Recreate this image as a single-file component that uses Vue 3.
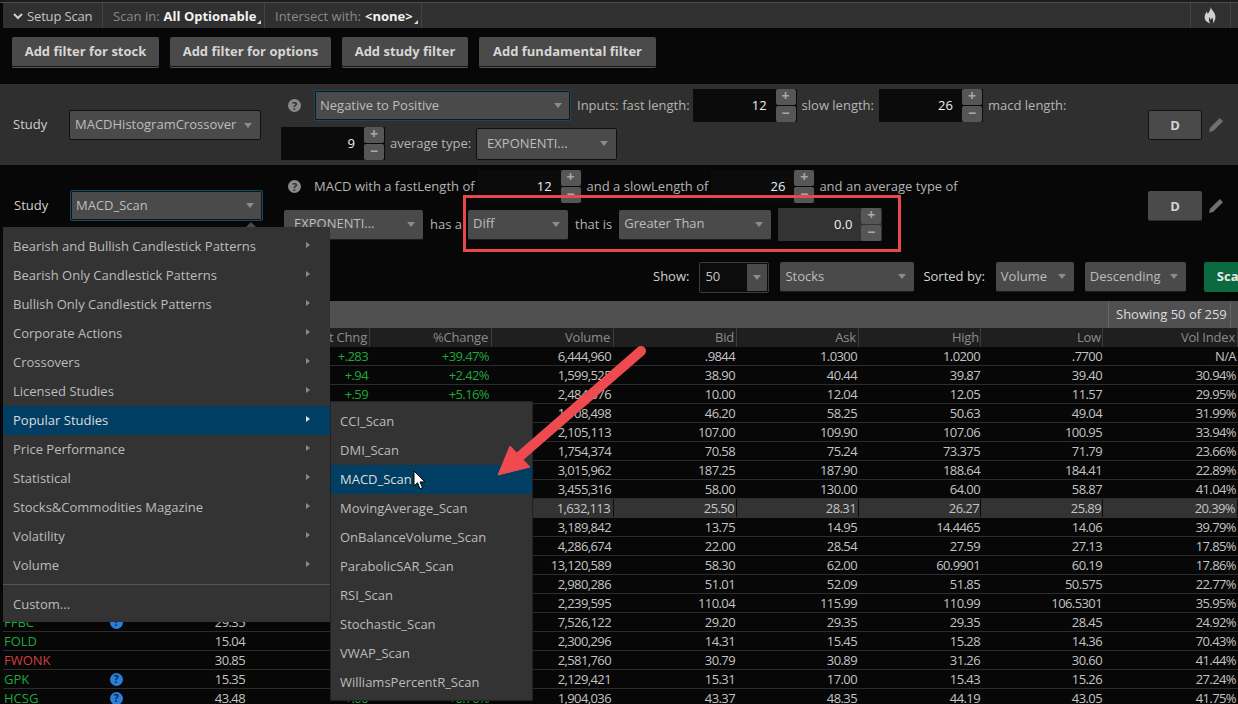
<template>
  <div class="page">
    <!-- top bar -->
    <div class="topline"></div>
    <header class="bar">
      <div class="seg setup">
        <svg class="chev" viewBox="0 0 10 8"><path d="M1 2l4 4 4-4" fill="none" stroke="#cfcfcf" stroke-width="2" /></svg>
        <span>Setup Scan</span>
      </div>
      <div class="seg scan"><span class="dim">Scan in:</span><b>All Optionable</b><i class="corner"></i></div>
      <div class="seg inter"><span class="dim">Intersect with:</span><b>&lt;none&gt;</b><i class="corner"></i></div>
      <div class="seg flame">
        <svg viewBox="0 0 12 17" width="12" height="17">
          <path d="M6.8 0c.4 2.800 3 4.200 4.200 7.200 1 2.800.4 6.800-2.400 9.300 1-2 .8-4-.6-6-.4 1.300-1 2-1.700 2.600-.1-1.300-.4-2.200-1-3-.5 1.500-.6 3.500.7 6.400C2.200 15.400.4 12.800.6 9.800.8 7.600 1.900 6.200 2.700 4.500c.5 1 .8 1.700 1 2.500C5 5 6.600 3 6.800 0z" fill="#d0d0d0" />
        </svg>
      </div>
    </header>

    <div class="filters">
      <button class="add" style="width: 147px">Add filter for stock</button>
      <button class="add" style="width: 161px">Add filter for options</button>
      <button class="add" style="width: 126px">Add study filter</button>
      <button class="add" style="width: 177px">Add fundamental filter</button>
    </div>

    <!-- first study -->
    <section class="study first">
      <div class="study-left">
        <span class="study-label">Study</span>
        <div class="sel boxed" style="width: 192px">MACDHistogramCrossover</div>
      </div>
      <div class="study-mid">
        <div class="line">
          <span class="help">?</span>
          <div class="sel focus" style="width: 257px; margin-left: 8px">Negative to Positive</div>
          <span class="lbl" style="margin-left: 1px">Inputs: fast length:</span>
          <div class="num" style="margin-left: -2px"><span class="val">12</span><div class="spin"><span>+</span><span>−</span></div></div>
          <span class="lbl">slow length:</span>
          <div class="num"><span class="val">26</span><div class="spin"><span>+</span><span>−</span></div></div>
          <span class="lbl">macd length:</span>
        </div>
        <div class="line">
          <div class="num"><span class="val">9</span><div class="spin"><span>+</span><span>−</span></div></div>
          <span class="lbl">average type:</span>
          <div class="sel boxed wide-pad" style="width: 141px; height: 32px">EXPONENTI...</div>
        </div>
      </div>
      <div class="study-right">
        <button class="d boxed-d">D</button>
        <svg class="pencil" viewBox="0 0 16 16" width="16" height="16"><path d="M11.800 1l3.200 3.200L5.200 14l-4.200 1 1-4.200zM1 15" fill="#707070" /></svg>
      </div>
    </section>

    <!-- second study -->
    <section class="study second">
      <div class="study-left">
        <span class="study-label shift">Study</span>
        <div class="sel focus" style="width: 193px">MACD_Scan</div>
      </div>
      <div class="study-mid">
        <div class="line">
          <span class="help">?</span>
          <span class="lbl" style="margin-left: 8px">MACD with a fastLength of</span>
          <div class="num" style="margin-left: -2px"><span class="val">12</span><div class="spin"><span>+</span><span>−</span></div></div>
          <span class="lbl">and a slowLength of</span>
          <div class="num" style="margin-left: -2px"><span class="val">26</span><div class="spin"><span>+</span><span>−</span></div></div>
          <span class="lbl" style="margin-left: -1px">and an average type of</span>
        </div>
        <div class="line line-b">
          <div class="sel wide-pad" style="width: 139px; margin-left: 3px">EXPONENTI...</div>
          <span class="lbl">has a</span>
          <div class="sel" style="width: 100px; margin-left: -1px">Diff</div>
          <span class="lbl">that is</span>
          <div class="sel" style="width: 152px">Greater Than</div>
          <div class="num lite"><span class="val">0.0</span><div class="spin"><span>+</span><span>−</span></div></div>
        </div>
      </div>
      <div class="study-right">
        <button class="d">D</button>
        <svg class="pencil" viewBox="0 0 16 16" width="16" height="16"><path d="M11.800 1l3.200 3.200L5.200 14l-4.200 1 1-4.200zM1 15" fill="#707070" /></svg>
      </div>
    </section>

    <!-- show / sort toolbar -->
    <div class="toolbar">
      <span class="lbl">Show:</span>
      <div class="show">50<i class="show-arrow"></i></div>
      <div class="sel" style="width: 134px; margin-left: 1px">Stocks</div>
      <span class="lbl" style="margin-left: -1px">Sorted by:</span>
      <div class="sel" style="width: 78px; margin-left: 1px">Volume</div>
      <div class="sel" style="width: 101px; margin-left: 1px">Descending</div>
      <button class="scan-btn">Scan</button>
    </div>

    <!-- results -->
    <div class="title-bar"><span class="showing">Showing 50 of 259</span></div>
    <div class="grid head">
      <span></span><span></span><span class="c"></span>
      <span v-for="h in headers" :key="h" class="c sep">{{ h }}</span>
    </div>
    <div v-for="(r, i) in rows" :key="i" class="grid row" :class="{ hi: i === 8 }">
      <span class="sym" :class="r.down ? 'red' : 'green'">{{ r.sym }}</span>
      <span class="ico"><i v-if="r.q" class="q">?</i></span>
      <span class="c">{{ r.last }}</span>
      <span class="c green">{{ r.net }}</span>
      <span class="c green">{{ r.pct }}</span>
      <span class="c">{{ r.vol }}</span>
      <span class="c">{{ r.bid }}</span>
      <span class="c">{{ r.ask }}</span>
      <span class="c">{{ r.high }}</span>
      <span class="c">{{ r.low }}</span>
      <span class="c">{{ r.vi }}</span>
    </div>

    <!-- overlays -->
    <div class="redbox"></div>

    <i class="menu-tip"></i>
    <div class="menu main">
      <div v-for="m in studyMenu" :key="m" class="item" :class="{ on: m === 'Popular Studies' }">
        {{ m }}<i class="tri"></i>
      </div>
      <div class="divider"></div>
      <div class="item">Custom...</div>
    </div>

    <div class="menu sub">
      <div v-for="m in scans" :key="m" class="item" :class="{ on: m === 'MACD_Scan' }">{{ m }}</div>
    </div>

    <svg class="arrow" width="1238" height="704" viewBox="0 0 1238 704">
      <path d="M641 351L518 458" stroke="#ee4a50" stroke-width="10" stroke-linecap="round" />
      <path d="M498 475L510 446L530 467z" fill="#ee4a50" stroke="#ee4a50" stroke-width="1" stroke-linejoin="round" />
    </svg>

    <svg class="cursor" width="13" height="20" viewBox="0 0 13 20">
      <path d="M1 1v15l3.500-3.300 2.500 6 2.500-1-2.500-5.800h5z" fill="#fff" stroke="#000" stroke-width="1" />
    </svg>
  </div>
</template>

<script setup>
const headers = ['Net Chng', '%Change', 'Volume', 'Bid', 'Ask', 'High', 'Low', 'Vol Index']

const studyMenu = [
  'Bearish and Bullish Candlestick Patterns',
  'Bearish Only Candlestick Patterns',
  'Bullish Only Candlestick Patterns',
  'Corporate Actions',
  'Crossovers',
  'Licensed Studies',
  'Popular Studies',
  'Price Performance',
  'Statistical',
  'Stocks&Commodities Magazine',
  'Volatility',
  'Volume',
]

const scans = [
  'CCI_Scan',
  'DMI_Scan',
  'MACD_Scan',
  'MovingAverage_Scan',
  'OnBalanceVolume_Scan',
  'ParabolicSAR_Scan',
  'RSI_Scan',
  'Stochastic_Scan',
  'VWAP_Scan',
  'WilliamsPercentR_Scan',
]

// vol, bid, ask, high, low, vol index
const raw = [
  '6,444,960 .9844 1.0300 1.0200 .7700 N/A',
  '1,599,525 38.90 40.44 39.87 39.40 30.94%',
  '2,484,076 10.00 12.04 12.05 11.57 29.95%',
  '1,108,498 46.20 58.25 50.63 49.04 31.99%',
  '2,105,113 107.00 109.90 107.06 100.95 33.94%',
  '1,754,374 70.58 75.24 73.375 71.79 23.66%',
  '3,015,962 187.25 187.90 188.64 184.41 22.89%',
  '3,455,316 58.00 130.00 64.00 58.87 41.04%',
  '1,632,113 25.50 28.31 26.27 25.89 20.39%',
  '3,189,842 13.75 14.95 14.4465 14.06 39.79%',
  '4,286,674 22.00 28.54 27.59 27.13 17.85%',
  '13,120,589 58.30 62.00 60.9901 60.19 17.86%',
  '2,980,286 51.01 52.09 51.85 50.575 22.77%',
  '2,239,595 110.04 115.99 110.99 106.5301 35.95%',
  '7,526,122 29.20 29.35 29.35 28.45 24.92%',
  '2,300,296 14.31 15.45 15.28 14.36 70.43%',
  '2,581,760 30.79 30.89 31.26 30.60 41.44%',
  '2,129,421 15.31 17.00 15.43 15.26 27.24%',
  '1,904,036 43.37 48.35 44.19 43.05 41.75%',
]

// the left columns only show where the menus leave them uncovered
const left = {
  0: { net: '+.283', pct: '+39.47%' },
  1: { net: '+.94', pct: '+2.42%' },
  2: { net: '+.59', pct: '+5.16%' },
  14: { sym: 'FFBC', q: true, last: '29.35' },
  15: { sym: 'FOLD', last: '15.04' },
  16: { sym: 'FWONK', last: '30.85', down: true },
  17: { sym: 'GPK', q: true, last: '15.35' },
  18: { sym: 'HCSG', q: true, last: '43.48', net: '+.00', pct: '+0.76%' },
}

const rows = raw.map((line, i) => {
  const [vol, bid, ask, high, low, vi] = line.split(' ')
  return { vol, bid, ask, high, low, vi, ...left[i] }
})
</script>

<style>
html,
body {
  background: #060606;
  overflow: hidden;
}
</style>

<style scoped>
.page {
  position: relative;
  width: 1238px;
  height: 704px;
  overflow: hidden;
  background: #070707;
  color: #c4c4c4;
  font-family: 'Open Sans', 'Noto Sans', sans-serif;
  font-size: 13px;
}
.topline {
  height: 3px;
  background: #1c1c1c;
  border-bottom: 1px solid #4a4a4a;
  box-sizing: border-box;
}
.bar {
  display: flex;
  height: 25px;
  margin-left: 3px;
  background: #303030;
}
.seg {
  display: flex;
  align-items: center;
  border-right: 1px solid #444;
  box-sizing: border-box;
  white-space: nowrap;
  position: relative;
}
.setup {
  width: 100px;
  padding-left: 10px;
  letter-spacing: -0.15px;
}
.chev {
  width: 10px;
  height: 8px;
  margin-right: 4px;
}
.scan {
  width: 162px;
  padding-left: 10px;
}
.inter {
  width: 157px;
  padding-left: 10px;
}
.seg b {
  margin-left: 4px;
  color: #f2f2f2;
  font-weight: 700;
}
.dim {
  color: #8a8a8a;
}
.corner {
  position: absolute;
  right: 3px;
  bottom: 4px;
  border-left: 4px solid transparent;
  border-bottom: 4px solid #d8d8d8;
}
.flame {
  margin-left: auto;
  width: 41px;
  height: 25px;
  margin-right: 7px;
  border-left: 1px solid #444;
  padding-left: 13px;
}
.filters {
  display: flex;
  gap: 11px;
  height: 56px;
  padding: 9px 0 0 12px;
  box-sizing: border-box;
}
.add {
  height: 31px;
  padding: 0 0 2px;
  border: none;
  border-bottom: 1px solid #555;
  box-shadow: inset 0 -1px 0 #151515;
  border-radius: 2px;
  background: #4a4a4a;
  color: #d6d6d6;
  font: 700 13px 'Open Sans', sans-serif;
}
.study {
  display: flex;
  box-sizing: border-box;
}
.first {
  height: 81px;
  background: #2f2f2f;
}
.second {
  height: 84px;
  background: #070707;
}
.study-left {
  width: 281px;
  flex: none;
  display: flex;
  align-items: center;
}
.study-label {
  width: 69px;
  flex: none;
  margin-top: -2px;
  padding-left: 13px;
  box-sizing: border-box;
  color: #d0d0d0;
}
.study-label.shift {
  width: 70px;
  padding-left: 14px;
}
.second .study-left {
  margin-top: -3px;
}
.study-mid {
  flex: 1;
  padding-top: 5px;
  display: flex;
  flex-direction: column;
  gap: 5px;
}
.line {
  display: flex;
  align-items: center;
  gap: 5px;
  height: 33px;
}
.line-b {
  gap: 7px;
  height: 33px;
}
.lbl {
  margin-top: -2px;
  color: #b4b4b4;
  white-space: nowrap;
}
.help {
  width: 13px;
  height: 13px;
  margin-left: 7px;
  margin-top: -1px;
  border-radius: 50%;
  background: #8a8a8a;
  color: #2f2f2f;
  font-size: 11px;
  font-weight: 700;
  line-height: 13px;
  text-align: center;
}
.sel {
  position: relative;
  display: flex;
  align-items: center;
  height: 30px;
  padding: 0 0 2px 5px;
  box-sizing: border-box;
  flex: none;
  background: #4a4a4a;
  border-radius: 2px;
  border-bottom: 1px solid #1c1c1c;
  color: #bdbdbd;
}
.sel.wide-pad {
  padding-left: 10px;
}
.sel::after {
  content: '';
  position: absolute;
  right: 8px;
  top: 12px;
  border-left: 4px solid transparent;
  border-right: 4px solid transparent;
  border-top: 5px solid #8c8c8c;
}
.sel.boxed {
  border: 1px solid #0f0f0f;
}
.sel.focus {
  height: 31px;
  border: 1px solid #0f4a66;
  box-shadow: inset 0 0 0 1px #141414;
  padding-left: 5px;
}
.num {
  display: flex;
  width: 104px;
  height: 33px;
  flex: none;
  background: #0b0b0b;
  box-sizing: border-box;
}
.num.lite {
  background: #333;
}
.val {
  flex: 1;
  padding-right: 9px;
  text-align: right;
  line-height: 33px;
  color: #f0f0f0;
}
.spin {
  display: flex;
  flex-direction: column;
  width: 20px;
  margin-right: 1px;
  gap: 1px;
}
.spin span {
  flex: 1;
  background: #565656;
  color: #a8a8a8;
  border-radius: 2px;
  font-weight: 700;
  font-size: 14px;
  line-height: 14px;
  text-align: center;
}
.study-right {
  width: 90px;
  flex: none;
  display: flex;
  align-items: center;
  margin-left: auto;
}
.d {
  width: 54px;
  height: 30px;
  padding: 0;
  border: 1px solid #111;
  border-radius: 2px;
  background: #4a4a4a;
  color: #d4d4d4;
  font: 700 13px 'Open Sans', sans-serif;
}
.second .d {
  border: none;
  border-bottom: 1px solid #2a2a2a;
  margin-top: -2px;
}
.second .pencil {
  margin-top: -2px;
}
.pencil {
  margin-left: 6px;
}
.toolbar {
  display: flex;
  align-items: center;
  height: 52px;
  padding: 4px 0 0 653px;
  box-sizing: border-box;
  gap: 10px;
}
.toolbar .lbl {
  color: #d2d2d2;
}
.show {
  position: relative;
  width: 70px;
  height: 31px;
  line-height: 27px;
  padding-left: 5px;
  box-sizing: border-box;
  flex: none;
  border: 1px solid #3c3c3c;
  border-radius: 2px;
  background: #0c0c0c;
}
.show-arrow {
  position: absolute;
  right: 1px;
  top: 1px;
  width: 20px;
  height: 27px;
  background: #4a4a4a;
}
.show-arrow::after {
  content: '';
  position: absolute;
  left: 6px;
  top: 11px;
  border-left: 4px solid transparent;
  border-right: 4px solid transparent;
  border-top: 5px solid #8c8c8c;
}
.scan-btn {
  flex: none;
  width: 60px;
  height: 30px;
  margin-left: 8px;
  padding: 0 0 2px 13px;
  text-align: left;
  border: none;
  border-radius: 2px;
  background: #0b6a3f;
  color: #e8e8e8;
  font: 700 13px 'Open Sans', sans-serif;
}
.title-bar {
  display: flex;
  justify-content: flex-end;
  height: 27px;
  margin-left: 3px;
  background: #505050;
}
.showing {
  width: 123px;
  margin-right: 7px;
  padding-left: 7px;
  box-sizing: border-box;
  line-height: 27px;
  color: #dedede;
  border-left: 1px solid #666;
  border-right: 1px solid #666;
}
.grid {
  display: grid;
  grid-template-columns: 105px 20px 120px 122px 122px 122px 123px 122px 122px 122px 135px;
  margin-left: 3px;
  height: 19px;
  line-height: 19px;
  box-sizing: border-box;
}
.head {
  background: #1f1f1f;
  color: #8c8c8c;
}
.head .c {
  letter-spacing: -0.2px;
}
.head .sep {
  border-right: 1px solid #3c3c3c;
}
.row {
  border-bottom: 1px solid #2c2c2c;
  color: #c4c4c4;
  background: #070707;
}
.row .c {
  letter-spacing: -0.6px;
}
.row.hi {
  background: #333;
  border-bottom-color: #333;
}
.row.hi .c {
  border-right: 1px solid #0c0c0c;
}
.c {
  text-align: right;
  padding-right: 2px;
  white-space: nowrap;
  overflow: hidden;
}
.grid .c:nth-child(3),
.grid .c:nth-child(5),
.grid .c:nth-child(6) {
  padding-right: 3px;
}
.grid .c:nth-child(9),
.grid .c:nth-child(10) {
  padding-right: 1px;
}
.sym {
  padding-left: 1px;
}
.green {
  color: #1fa83c;
}
.red {
  color: #d0403e;
}
.ico {
  display: flex;
  align-items: center;
}
.q {
  width: 13px;
  height: 13px;
  margin-left: 2px;
  border-radius: 50%;
  background: #2a7fd8;
  color: #10233a;
  font: 700 10px/13px 'Open Sans', sans-serif;
  font-style: normal;
  text-align: center;
}
.redbox {
  position: absolute;
  left: 463px;
  top: 195px;
  width: 438px;
  height: 57px;
  box-sizing: border-box;
  border: 3px solid #e8474c;
}
.menu-tip {
  position: absolute;
  left: 246px;
  top: 222px;
  border-left: 5px solid transparent;
  border-right: 5px solid transparent;
  border-bottom: 5px solid #4a4a4a;
}
.menu {
  position: absolute;
  background: #333;
  box-sizing: border-box;
  color: #bcbcbc;
}
.main {
  left: 3px;
  top: 227px;
  width: 327px;
  height: 395px;
  padding-top: 5px;
}
.sub {
  left: 331px;
  top: 402px;
  width: 201px;
  height: 298px;
  padding-top: 5px;
  box-shadow: 0 0 0 1px #222;
}
.item {
  position: relative;
  height: 29px;
  line-height: 28px;
  padding-left: 10px;
}
.sub .item {
  padding-left: 9px;
}
.item.on {
  background: #003f63;
  color: #dcdcdc;
}
.tri {
  position: absolute;
  right: 20px;
  top: 10px;
  border-top: 3px solid transparent;
  border-bottom: 3px solid transparent;
  border-left: 4px solid #8a8a8a;
}
.on .tri {
  border-left-color: #e0e0e0;
}
.divider {
  height: 1px;
  margin: 4px 0 5px;
  background: #555;
}
.arrow {
  position: absolute;
  left: 0;
  top: 0;
  pointer-events: none;
}
.cursor {
  position: absolute;
  left: 413px;
  top: 470px;
}
</style>
